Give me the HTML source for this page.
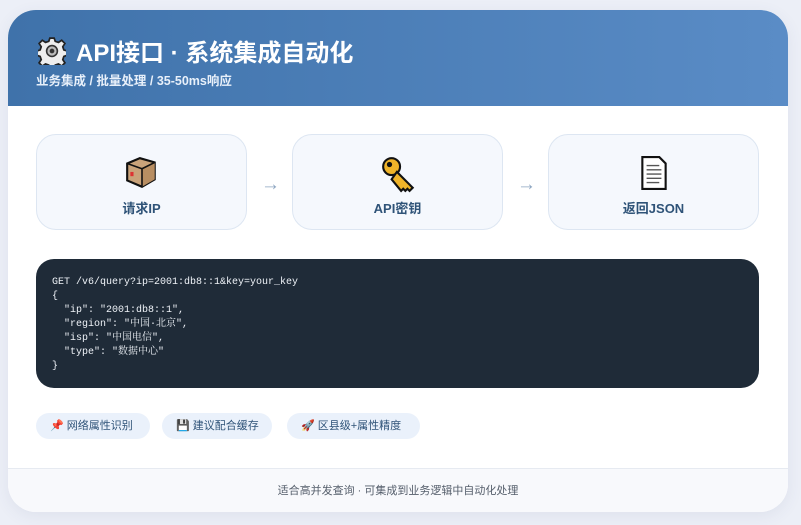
<!DOCTYPE html>
<html><head><meta charset="utf-8"><style>
*{margin:0;padding:0;box-sizing:border-box}
body{width:801px;height:525px;background:#eceff7;font-family:"Liberation Sans","Noto Sans CJK SC",sans-serif;position:relative;overflow:hidden}
.card{position:absolute;left:8px;top:10px;width:780px;height:502px;background:#fff;border-radius:28px;overflow:hidden;box-shadow:0 4px 16px rgba(60,80,120,.08)}
.hd{position:absolute;left:0;top:0;width:780px;height:96px;background:linear-gradient(90deg,#3f72aa,#5a8cc6)}
.hd h1{position:absolute;left:30px;top:23px;font-size:24px;color:#fff;font-weight:bold;display:flex;align-items:center;gap:10px}
.hd p{position:absolute;left:28px;top:60px;font-size:12.5px;color:#e8f0fa;font-weight:bold}
.step{position:absolute;top:124px;width:211px;height:96px;background:#f5f8fd;border:1px solid #dde6f2;border-radius:20px;text-align:center}
.step svg{position:absolute;left:87px;top:20px}
.step span{position:absolute;left:0;right:0;top:63px;font-size:13px;font-weight:bold;color:#2f5378}
.arr{position:absolute;top:164px;color:#8ea6c2;font-size:19px}
.code{position:absolute;left:28px;top:249px;width:723px;height:129px;background:#1f2b38;border-radius:18px;padding:17px 16px;color:#eef2f7;font-family:"Liberation Mono","Noto Serif CJK SC",monospace;font-size:10px;line-height:14px;white-space:pre}
.pill{position:absolute;top:403px;height:26px;background:#eaf1fb;border-radius:13px;font-size:11px;color:#2f5378;line-height:26px;padding-left:14px}
.ft{position:absolute;left:0;top:458px;width:780px;height:44px;background:#f8f9fc;border-top:1px solid #e6eaf1;text-align:center;font-size:11px;color:#555e6b;line-height:44px}
</style></head><body>
<div class="card">
<div class="hd"><h1><svg width="28" height="28" viewBox="0 0 26 26"><path d="M11 1h4l1 3 3 1 3-2 3 3-2 3 1 3 3 1v4l-3 1-1 3 2 3-3 3-3-2-3 1-1 3h-4l-1-3-3-1-3 2-3-3 2-3-1-3-3-1v-4l3-1 1-3-2-3 3-3 3 2 3-1z" fill="#eee" stroke="#222" stroke-width="1.6"/><circle cx="13" cy="13" r="5" fill="#bbb" stroke="#333" stroke-width="1.5"/><circle cx="13" cy="13" r="2.2" fill="#333"/></svg>API接口 · 系统集成自动化</h1>
<p>业务集成 / 批量处理 / 35-50ms响应</p></div>
<div class="step" style="left:28px"><svg width="36" height="36" viewBox="0 0 34 34"><path d="M3 8l12-5 14 4v16l-12 7-14-6z" fill="#c9a37a" stroke="#111" stroke-width="2"/><path d="M17 13l12-6v16l-12 7z" fill="#b88e62"/><path d="M3 8l14 5 12-6M17 13v17" fill="none" stroke="#111" stroke-width="1.5"/><rect x="6" y="16" width="3" height="4" fill="#d33"/></svg><span>请求IP</span></div>
<div class="arr" style="left:253px">→</div>
<div class="step" style="left:284px"><svg width="38" height="38" viewBox="0 0 36 36"><circle cx="11" cy="11" r="8" fill="#f0b429" stroke="#111" stroke-width="2"/><circle cx="9" cy="9" r="2.5" fill="#111"/><path d="M16 16l15 15-3 3-2-2-2 2-2-2-2 2-9-11z" fill="#f0b429" stroke="#111" stroke-width="2"/></svg><span>API密钥</span></div>
<div class="arr" style="left:509px">→</div>
<div class="step" style="left:540px"><svg width="36" height="36" viewBox="0 0 34 34"><path d="M6 2h16l6 6v24H6z" fill="#fff" stroke="#111" stroke-width="2"/><path d="M10 10h12M10 14h14M10 18h14M10 22h14M10 26h12" stroke="#555" stroke-width="1.3"/></svg><span>返回JSON</span></div>
<div class="code">GET /v6/query?ip=2001:db8::1&amp;key=your_key
{
  "ip": "2001:db8::1",
  "region": "中国·北京",
  "isp": "中国电信",
  "type": "数据中心"
}</div>
<div class="pill" style="left:28px;width:114px">📌 网络属性识别</div>
<div class="pill" style="left:154px;width:110px">💾 建议配合缓存</div>
<div class="pill" style="left:279px;width:133px">🚀 区县级+属性精度</div>
<div class="ft">适合高并发查询 · 可集成到业务逻辑中自动化处理</div>
</div>
</body></html>
